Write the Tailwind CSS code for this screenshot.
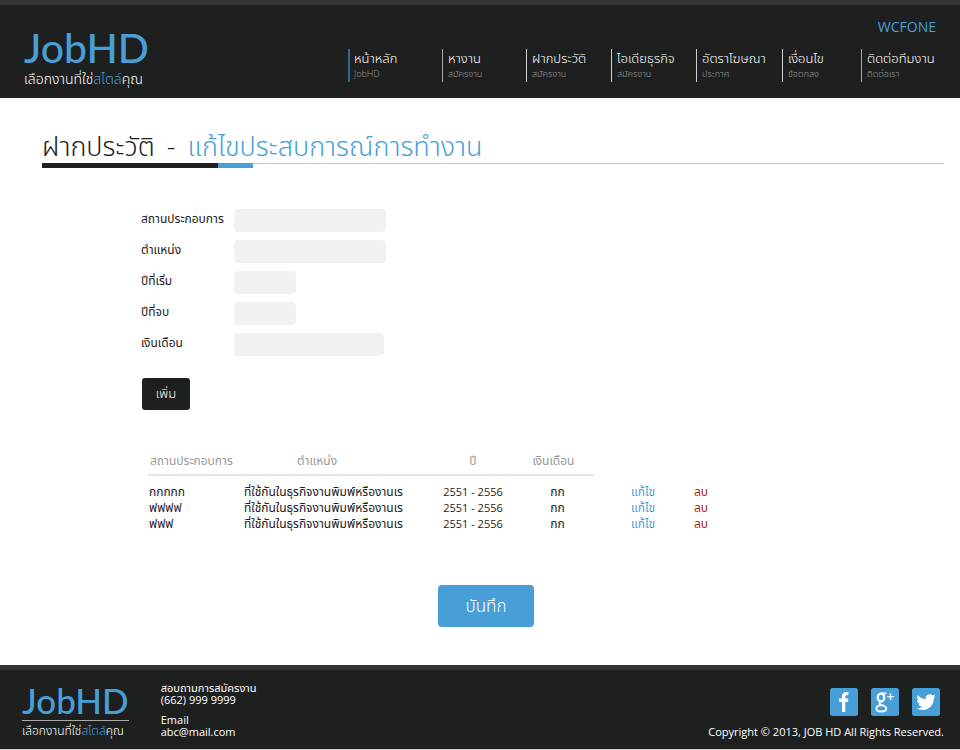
<!DOCTYPE html>
<html lang="th">
<head>
<meta charset="utf-8">
<meta name="viewport" content="width=device-width, initial-scale=1">
<title>JobHD</title>
<script src="https://cdn.jsdelivr.net/npm/@tailwindcss/browser@4"></script>
</head>
<body class="flex min-h-screen flex-col bg-white font-['Open_Sans','Noto_Sans_Thai','Noto_Sans',sans-serif] text-[#1e201f]">
<header class="flex items-start justify-between border-t-[5px] border-[#353435] bg-[#1e201f] pr-4 pb-2">
  <a href="#" class="flex flex-col pt-5 pl-6">
    <span class="font-['Lato'] text-[41px] leading-[46px] font-medium text-[#489fd8]">JobHD</span>
    <span class="text-sm leading-4 whitespace-nowrap text-white font-light">เลือกงานที่ใช่<span class="text-[#489fd8]">สไตล์</span>คุณ</span>
  </a>
  <div class="flex w-[596px] flex-col pt-3 pb-2">
    <a href="#" class="mr-2 self-end text-sm leading-5 text-[#489fd8]">WCFONE</a>
    <nav class="mt-3 grid h-[33px] grid-cols-[94fr_84fr_85fr_85fr_86fr_79fr_83fr] whitespace-nowrap font-light">
      <a href="#" class="flex flex-col border-l-2 border-[#2c6a94] pl-1 text-[13px] leading-[19px] text-white">หน้าหลัก<span class="text-[9px] leading-3 text-[#999]">JobHD</span></a>
      <a href="#" class="flex flex-col border-l border-[#aaa] pl-[5px] text-[13px] leading-[19px] text-white">หางาน<span class="text-[9px] leading-3 text-[#999]">สมัครงาน</span></a>
      <a href="#" class="flex flex-col border-l border-[#ccc] pl-[5px] text-[13px] leading-[19px] text-white">ฝากประวัติ<span class="text-[9px] leading-3 text-[#999]">สมัครงาน</span></a>
      <a href="#" class="flex flex-col border-l border-[#ccc] pl-[5px] text-[13px] leading-[19px] text-white">ไอเดียธุรกิจ<span class="text-[9px] leading-3 text-[#999]">สมัครงาน</span></a>
      <a href="#" class="flex flex-col border-l border-[#ccc] pl-[5px] text-[13px] leading-[19px] text-white">อัตราโฆษณา<span class="text-[9px] leading-3 text-[#999]">ประกาศ</span></a>
      <a href="#" class="flex flex-col border-l border-[#ccc] pl-[5px] text-[13px] leading-[19px] text-white">เงื่อนไข<span class="text-[9px] leading-3 text-[#999]">ข้อตกลง</span></a>
      <a href="#" class="flex flex-col border-l border-[#aaa] pl-[5px] text-[13px] leading-[19px] text-white">ติดต่อทีมงาน<span class="text-[9px] leading-3 text-[#999]">ติดต่อเรา</span></a>
    </nav>
  </div>
</header>

<main class="flex grow flex-col pr-4 pl-[42px]">
  <h1 class="mt-8 flex gap-3 text-[27px] leading-8 font-light whitespace-nowrap"><span>ฝากประวัติ</span><span>-</span><span class="text-[#489fd8]">แก้ไขประสบการณ์การทำงาน</span></h1>
  <div class="mt-px flex items-start">
    <span class="h-[5px] w-44 bg-[#1e201f]"></span>
    <span class="h-[5px] w-[35px] bg-[#489fd8]"></span>
    <span class="h-px grow bg-[#c8cbca]"></span>
  </div>
  <form class="flex flex-col">
    <div class="mt-[41px] ml-[99px] grid grid-cols-[93px_1fr] gap-y-2 text-xs leading-[23px]">
      <label for="company" class="-mt-0.5 whitespace-nowrap">สถานประกอบการ</label>
      <input id="company" type="text" class="h-[23px] w-[152px] rounded bg-[#f1f1f1] px-2">
      <label for="position" class="-mt-0.5 whitespace-nowrap">ตำแหน่ง</label>
      <input id="position" type="text" class="h-[23px] w-[152px] rounded bg-[#f1f1f1] px-2">
      <label for="start" class="-mt-0.5 whitespace-nowrap">ปีที่เริ่ม</label>
      <input id="start" type="text" class="h-[23px] w-[62px] rounded-sm bg-[#f1f1f1] px-2">
      <label for="end" class="-mt-0.5 whitespace-nowrap">ปีที่จบ</label>
      <input id="end" type="text" class="h-[23px] w-[62px] rounded-sm bg-[#f1f1f1] px-2">
      <label for="salary" class="-mt-0.5 whitespace-nowrap">เงินเดือน</label>
      <input id="salary" type="text" class="h-[23px] w-[150px] rounded bg-[#f1f1f1] px-2">
    </div>
    <button type="button" class="mt-[22px] ml-[100px] h-8 w-12 rounded-[3px] bg-[#1e201f] text-[13px] font-light text-white">เพิ่ม</button>

    <table class="mt-10 ml-[106px] w-[584px] table-fixed text-xs leading-4 whitespace-nowrap">
      <colgroup><col class="w-[95px]"><col class="w-[190px]"><col class="w-20"><col class="w-[81px]"><col class="w-[98px]"><col class="w-10"></colgroup>
      <thead>
        <tr class="text-[#999]">
          <th class="border-b-2 border-[#e5e5e5] pb-0.5 pl-0.5 text-left leading-[22px] font-normal">สถานประกอบการ</th>
          <th class="border-b-2 border-[#e5e5e5] pr-[42px] pb-0.5 font-normal">ตำแหน่ง</th>
          <th class="border-b-2 border-[#e5e5e5] pb-0.5 font-normal">ปี</th>
          <th class="border-b-2 border-[#e5e5e5] pb-0.5 font-normal">เงินเดือน</th>
          <td></td><td></td>
        </tr>
      </thead>
      <tbody>
        <tr><td class="pt-2 pl-px">กกกกก</td><td class="pt-2 pl-px">ที่ใช้กันในธุรกิจงานพิมพ์หรืองานเร</td><td class="pt-2 text-center text-[11px]">2551 - 2556</td><td class="pt-2 pl-2 text-center">กก</td><td class="pt-2 text-center"><a href="#" class="text-[#489fd8]">แก้ไข</a></td><td class="pt-2 pl-0.5"><a href="#" class="text-[#a81e22]">ลบ</a></td></tr>
        <tr><td class="pl-px">ฟฟฟฟ</td><td class="pl-px">ที่ใช้กันในธุรกิจงานพิมพ์หรืองานเร</td><td class="text-center text-[11px]">2551 - 2556</td><td class="pl-2 text-center">กก</td><td class="text-center"><a href="#" class="text-[#489fd8]">แก้ไข</a></td><td class="pl-0.5"><a href="#" class="text-[#a81e22]">ลบ</a></td></tr>
        <tr><td class="pl-px">ฟฟฟ</td><td class="pl-px">ที่ใช้กันในธุรกิจงานพิมพ์หรืองานเร</td><td class="text-center text-[11px]">2551 - 2556</td><td class="pl-2 text-center">กก</td><td class="text-center"><a href="#" class="text-[#489fd8]">แก้ไข</a></td><td class="pl-0.5"><a href="#" class="text-[#a81e22]">ลบ</a></td></tr>
      </tbody>
    </table>
    <button type="submit" class="mt-[53px] mb-8 ml-[396px] h-[42px] w-24 rounded bg-[#489fd8] text-[17px] font-light text-white">บันทึก</button>
  </form>
</main>

<footer class="flex items-start border-t-[5px] border-b border-t-[#353435] border-b-[#c8cbca] bg-[#1e201f] pr-4 pb-[9px] text-[11px] leading-3 text-white">
  <a href="#" class="flex flex-col pt-2.5 pl-[22px]">
    <span class="font-['Lato'] text-[35px] leading-10 font-medium text-[#489fd8]">JobHD</span>
    <span class="border-t border-[#aaa] pt-0.5 text-xs leading-4 font-light whitespace-nowrap">เลือกงานที่ใช่<span class="text-[#489fd8]">สไตล์</span>คุณ</span>
  </a>
  <address class="ml-8 flex flex-col pt-3 whitespace-nowrap not-italic">
    <span>สอบถามการสมัครงาน</span>
    <span>(662) 999 9999</span>
    <span class="mt-2">Email</span>
    <a href="mailto:abc@mail.com">abc@mail.com</a>
  </address>
  <div class="ml-auto flex flex-col items-end pt-[18px]">
    <div class="mr-1 flex gap-[13px]">
      <a href="#" aria-label="Facebook"><svg viewBox="0 0 28 28" class="size-7"><rect width="28" height="28" rx="2.5" fill="#489fd8"/><path fill="#fff" d="M12 24v-10H9v-3.500h3V8.500C12 5.500 13.600 4 16.300 4h2v3.200h-1.500c-1.200 0-1.500.6-1.500 1.600v1.700h3l-.4 3.500h-2.600v10z"/></svg></a>
      <a href="#" aria-label="Google Plus"><svg viewBox="0 0 28 28" class="size-7"><rect width="28" height="28" rx="2.500" fill="#489fd8"/><g fill="none" stroke="#fff"><ellipse cx="10" cy="9.500" rx="3.300" ry="3.900" stroke-width="2.200"/><path stroke-width="1.800" d="M10 5.400h5.500M10 13.300c-2 1.300-2 2.700.5 3.500 2.500.8 4.800 1.700 4.800 3.700 0 1.800-1.900 3-4.900 3-3 0-5-1.100-5-3 0-2 2.200-3.400 5.600-3.400"/><path stroke-width="1.300" d="M19.500 5.500v6.500M16.300 8.700h6.500"/></g></svg></a>
      <a href="#" aria-label="Twitter"><svg viewBox="0 0 28 28" class="size-7"><rect width="28" height="28" rx="2.500" fill="#489fd8"/><path fill="#fff" transform="translate(4.300 4.500) scale(.81)" d="M23.950 4.570a10 10 0 0 1-2.820.77 4.960 4.960 0 0 0 2.160-2.720c-.95.550-2 .950-3.130 1.180a4.920 4.920 0 0 0-8.380 4.480C7.690 8.100 4.070 6.130 1.640 3.160a4.820 4.820 0 0 0-.67 2.480c0 1.710.87 3.210 2.190 4.100a4.900 4.900 0 0 1-2.230-.62v.060a4.920 4.920 0 0 0 3.950 4.830 5 5 0 0 1-2.210.080 4.940 4.940 0 0 0 4.600 3.420A9.870 9.870 0 0 1 0 19.540a13.990 13.990 0 0 0 7.550 2.210c9.050 0 14-7.500 14-13.980 0-.21 0-.42-.020-.63a9.940 9.940 0 0 0 2.460-2.550z"/></svg></a>
    </div>
    <p class="mt-2 text-[11px] leading-4 whitespace-nowrap">Copyright © 2013, JOB HD All Rights Reserved.</p>
  </div>
</footer>
</body>
</html>
